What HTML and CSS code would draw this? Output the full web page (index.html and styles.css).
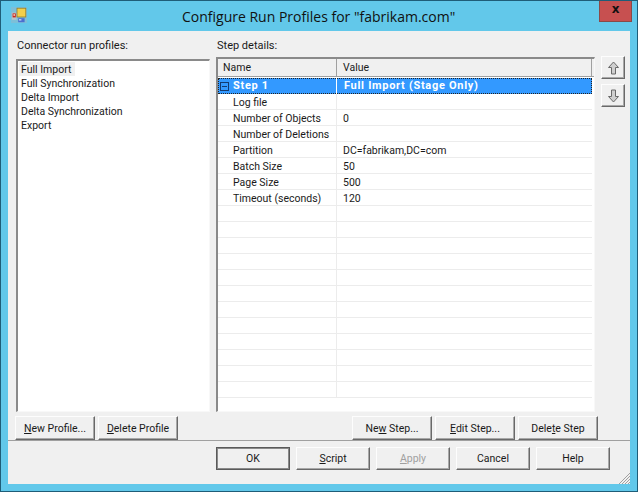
FILE: index.html
```html
<!DOCTYPE html>
<html lang="en">
<head>
    <meta charset="UTF-8" />
    <title>Configure Run Profiles</title>
    <link rel="stylesheet" href="styles.css">
</head>
<body>
<div class="window">
    <div class="titlebar">
        <svg class="app-icon" width="20" height="20" viewBox="0 0 20 20">
            <rect x="0" y="0" width="20" height="20" fill="#8fb9cc" opacity="0.6"/>
            <rect x="1" y="7" width="6" height="9" fill="#b8c4c8"/>
            <rect x="2" y="8" width="4" height="5" fill="#c8281e"/>
            <rect x="3" y="9" width="2" height="2" fill="#f4d0c0"/>
            <rect x="7" y="1" width="12" height="12" fill="#8a7a30"/>
            <rect x="8" y="2" width="10" height="10" fill="#f2cf4a"/>
            <rect x="9" y="14" width="8" height="5" fill="#4a6fd0"/>
            <rect x="10" y="15" width="3" height="2" fill="#b8c8f0"/>
        </svg>
        <div class="title">Configure Run Profiles for "fabrikam.com"</div>
        <div class="close">x</div>
    </div>
    <div class="client">
        <div class="main">
            <div class="left-col">
                <div class="label">Connector run profiles:</div>
                <div class="listbox">
                    <div class="list-item selected">Full Import</div>
                    <div class="list-item">Full Synchronization</div>
                    <div class="list-item">Delta Import</div>
                    <div class="list-item">Delta Synchronization</div>
                    <div class="list-item">Export</div>
                </div>
                <div class="btn-row">
                    <button class="btn"><u>N</u>ew Profile...</button>
                    <button class="btn"><u>D</u>elete Profile</button>
                </div>
            </div>
            <div class="right-col">
                <div class="label">Step details:</div>
                <div class="grid-row">
                    <div class="grid">
                        <div class="grid-head">
                            <div class="col-name">Name</div>
                            <div class="col-value">Value</div>
                        </div>
                        <div class="step-row">
                            <div class="col-name"><span class="expander"></span>Step 1</div>
                            <div class="col-value">Full Import (Stage Only)</div>
                        </div>
                        <div class="row"><div class="col-name">Log file</div><div class="col-value"></div></div>
                        <div class="row"><div class="col-name">Number of Objects</div><div class="col-value">0</div></div>
                        <div class="row"><div class="col-name">Number of Deletions</div><div class="col-value"></div></div>
                        <div class="row"><div class="col-name">Partition</div><div class="col-value">DC=fabrikam,DC=com</div></div>
                        <div class="row"><div class="col-name">Batch Size</div><div class="col-value">50</div></div>
                        <div class="row"><div class="col-name">Page Size</div><div class="col-value">500</div></div>
                        <div class="row"><div class="col-name">Timeout (seconds)</div><div class="col-value">120</div></div>
                        <div class="row"><div class="col-name"></div><div class="col-value"></div></div>
                        <div class="row"><div class="col-name"></div><div class="col-value"></div></div>
                        <div class="row"><div class="col-name"></div><div class="col-value"></div></div>
                        <div class="row"><div class="col-name"></div><div class="col-value"></div></div>
                        <div class="row"><div class="col-name"></div><div class="col-value"></div></div>
                        <div class="row"><div class="col-name"></div><div class="col-value"></div></div>
                        <div class="row"><div class="col-name"></div><div class="col-value"></div></div>
                        <div class="row"><div class="col-name"></div><div class="col-value"></div></div>
                        <div class="row"><div class="col-name"></div><div class="col-value"></div></div>
                        <div class="row"><div class="col-name"></div><div class="col-value"></div></div>
                        <div class="row"><div class="col-name"></div><div class="col-value"></div></div>
                        <div class="row"><div class="col-name"></div><div class="col-value"></div></div>
                    </div>
                    <div class="move-btns">
                        <button class="btn move">
                            <svg width="11" height="14" viewBox="0 0 11 14"><path d="M5.5 1 L10.5 6.5 H7.5 V13 H3.5 V6.5 H0.5 Z" fill="#cfcfcf" stroke="#6a6a6a"/></svg>
                        </button>
                        <button class="btn move">
                            <svg width="11" height="14" viewBox="0 0 11 14"><path d="M5.5 13 L10.5 7.5 H7.5 V1 H3.5 V7.5 H0.5 Z" fill="#cfcfcf" stroke="#6a6a6a"/></svg>
                        </button>
                    </div>
                </div>
                <div class="btn-row step-btns">
                    <button class="btn">Ne<u>w</u> Step...</button>
                    <button class="btn"><u>E</u>dit Step...</button>
                    <button class="btn">Dele<u>t</u>e Step</button>
                </div>
            </div>
        </div>
        <div class="footer">
            <button class="btn dlg default">OK</button>
            <button class="btn dlg"><u>S</u>cript</button>
            <button class="btn dlg disabled"><u>A</u>pply</button>
            <button class="btn dlg">Cancel</button>
            <button class="btn dlg">Help</button>
            <svg class="grip" width="12" height="12" viewBox="0 0 12 12">
                <path d="M12 1 L1 12 M12 4 L4 12 M12 7 L7 12 M12 10 L10 12" stroke="#a0a0a0" fill="none"/>
            </svg>
        </div>
    </div>
</div>
</body>
</html>
```
FILE: styles.css
```css
html, body {
  margin: 0;
  padding: 0;
}
body {
  width: 638px;
  height: 492px;
  overflow: hidden;
  font-family: Roboto, "Liberation Sans", sans-serif;
  font-size: 10.5px;
  color: #1a1a1a;
}
.window {
  width: 638px;
  height: 492px;
  box-sizing: border-box;
  border: 1px solid #1f5d78;
  background: #62c8ea;
  padding: 0 7px 7px 7px;
  display: flex;
  flex-direction: column;
}
.titlebar {
  height: 30px;
  display: flex;
  align-items: center;
  position: relative;
}
.app-icon {
  margin: 0 0 2px 3px;
  width: 16px;
  height: 16px;
}
.title {
  position: absolute;
  left: 174px;
  top: 6px;
  font-family: "Open Sans", sans-serif;
  font-size: 14px;
  line-height: 20px;
  color: #111;
  white-space: nowrap;
}
.close {
  position: absolute;
  right: -2px;
  top: 0;
  width: 33px;
  height: 21px;
  background: #c75050;
  border: 1px solid #8a4a48;
  border-top: none;
  box-sizing: border-box;
  color: #111;
  font-family: "DejaVu Sans", sans-serif;
  font-weight: bold;
  font-size: 12px;
  line-height: 17px;
  text-align: center;
}
.client {
  flex: 1;
  background: #f0f0f0;
  display: flex;
  flex-direction: column;
}
.main {
  display: flex;
  padding: 8px 0 0 7px;
  height: 410px;
  box-sizing: border-box;
  border-bottom: 1px solid #a0a0a0;
}
.label {
  height: 20px;
  line-height: 14px;
  padding-left: 2px;
  font-size: 11px;
}
.right-col .label {
  padding-left: 1px;
}
.left-col {
  width: 201px;
  display: flex;
  flex-direction: column;
}
.listbox {
  width: 194px;
  height: 355px;
  box-sizing: border-box;
  margin-left: 1px;
  background: #fff;
  border: 1px solid #f8f8f8;
  border-top: 2px solid #8a8a8a;
  border-left: 2px solid #8a8a8a;
  padding: 1px 0 0 1px;
}
.list-item {
  height: 14px;
  line-height: 15px;
  padding-left: 2px;
}
.list-item.selected {
  background: #f0f0f0;
  width: 54px;
}
.btn-row {
  display: flex;
  gap: 3px;
  margin-top: 4px;
}
.step-btns {
  margin-left: 136px;
}
.btn {
  width: 80px;
  height: 24px;
  padding: 0;
  box-sizing: border-box;
  background: #f0f0f0;
  border: 1px solid;
  border-color: #fdfdfd #696969 #696969 #fdfdfd;
  box-shadow: inset -1px -1px 0 #a8a8a8;
  font-family: inherit;
  font-size: 10.5px;
  color: #1a1a1a;
}
.right-col {
  width: 608px;
  flex: 1;
  display: flex;
  flex-direction: column;
}
.grid-row {
  display: flex;
}
.grid {
  width: 379px;
  height: 355px;
  box-sizing: border-box;
  background: #fff;
  border: 1px solid #f8f8f8;
  border-top: 2px solid #8a8a8a;
  border-left: 2px solid #8a8a8a;
  overflow: hidden;
}
.grid-head {
  display: flex;
  height: 17px;
  line-height: 17px;
  background: #f0f0f0;
  border-bottom: 1px solid #a0a0a0;
  margin-bottom: 1px;
}
.col-name {
  width: 119px;
  box-sizing: border-box;
  padding-left: 15px;
  flex-shrink: 0;
  white-space: nowrap;
  overflow: hidden;
}
.col-value {
  flex: 1;
  padding-left: 6px;
  white-space: nowrap;
}
.grid-head .col-name {
  padding-left: 5px;
  border-right: 1px solid #a0a0a0;
}
.grid-head .col-value {
  width: 255px;
  box-sizing: border-box;
  flex: none;
  border-right: 1px solid #a0a0a0;
}
.step-row {
  display: flex;
  height: 16px;
  line-height: 16px;
  font-size: 11px;
  background: #3399ff;
  color: #fff;
  font-weight: bold;
  outline: 1px dotted #222;
  outline-offset: -1px;
  margin-right: 2px;
  letter-spacing: 0.7px;
}
.step-row .col-name {
  display: flex;
  align-items: center;
  padding-left: 2px;
  border-right: 1px solid #fff;
}
.step-row .col-value {
  padding-left: 7px;
}
.expander {
  width: 9px;
  height: 9px;
  margin-right: 4px;
  box-sizing: border-box;
  border: 1px solid #123a70;
  background: linear-gradient(#123a70, #123a70) center / 5px 1px no-repeat;
}
.row {
  display: flex;
  height: 16px;
  box-sizing: border-box;
  line-height: 17px;
  border-bottom: 1px solid #ececec;
  margin-right: 2px;
}
.row .col-name {
  border-right: 1px solid #ececec;
  padding-left: 15px;
}
.move-btns {
  display: flex;
  flex-direction: column;
  gap: 5px;
  margin-left: 6px;
  margin-top: -1px;
}
.move {
  width: 24px;
  height: 23px;
  display: flex;
  align-items: center;
  justify-content: center;
}
.footer {
  flex: 1;
  display: flex;
  gap: 6px;
  padding: 6px 0 0 208px;
  position: relative;
}
.dlg {
  width: 74px;
  height: 23px;
}
.default {
  border: 1px solid #5a5a5a;
  box-shadow: inset 0 0 0 1px #8a8a8a;
}
.disabled {
  color: #a0a0a0;
}
.grip {
  position: absolute;
  right: 0;
  bottom: 0;
}
```
